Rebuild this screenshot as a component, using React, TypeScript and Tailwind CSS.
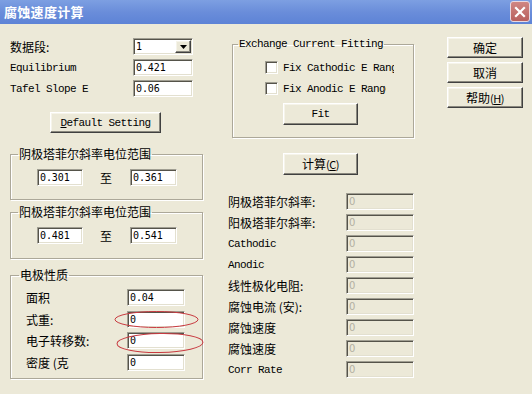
import React from "react";

const CJK = "font-['Noto_Sans_CJK_SC',sans-serif] text-[12px] leading-[14px]";
const MONO = "font-['Liberation_Mono','Noto_Sans_CJK_SC',monospace] text-[11px] tracking-[-0.6px] leading-[14px]";

const sunken =
  "border border-t-[#a09e92] border-l-[#a09e92] border-b-white border-r-white shadow-[inset_1px_1px_0_#55534a,inset_-1px_-1px_0_#e3e0d0]";
const raised =
  "border border-t-white border-l-white border-b-[#404040] border-r-[#404040] shadow-[inset_-1px_-1px_0_#8a887e,inset_1px_1px_0_#f6f4ea] bg-[#ece9d8]";

function Edit({ v, w, disabled }: { v: string; w: string; disabled?: boolean }) {
  return (
    <div
      className={`${w} h-[17px] ${sunken} ${disabled ? "bg-[#ece9d8]" : "bg-white"} flex items-center pl-[2px] overflow-hidden`}
    >
      {disabled ? (
        <span className="font-['DejaVu_Sans',sans-serif] text-[10px] leading-[12px] text-[#b3b0a2]">{v}</span>
      ) : (
        <span className="font-['DejaVu_Sans_Mono',monospace] text-[10px] tracking-[-0.1px] leading-[12px] text-black">{v}</span>
      )}
    </div>
  );
}

function Btn({ children, cls }: { children: React.ReactNode; cls: string }) {
  return <div className={`${raised} ${cls} flex items-center justify-center text-black`}>{children}</div>;
}

function Check() {
  return <div className={`w-[13px] h-[13px] bg-white ${sunken}`} />;
}

function Group({
  label,
  labelCls,
  cls,
  children,
}: {
  label: string;
  labelCls: string;
  cls: string;
  children: React.ReactNode;
}) {
  return (
    <fieldset
      className={`border border-[#aca899] rounded-none shadow-[1px_1px_0_#ffffff,inset_1px_1px_0_#ffffff] ${cls}`}
    >
      <legend className={`${labelCls} px-[1px] text-black`}>{label}</legend>
      {children}
    </fieldset>
  );
}

export default function App() {
  return (
    <div className="w-[532px] h-[394px] overflow-hidden bg-[#ece9d8] relative">
      {/* title bar */}
      <div className="h-[24px] flex items-start justify-between pl-[4px] pr-[2px] bg-gradient-to-b from-[#7d9fe2] via-[#6a8dda] to-[#5d83d6]">
        <span className="mt-[4px] font-['Noto_Sans_CJK_SC',sans-serif] font-bold text-[13px] leading-[16px] text-white tracking-[0.3px]">
          腐蚀速度计算
        </span>
        <div className="mt-[1px] w-[20px] h-[21px] rounded-[3px] border border-[#e8d8e0] bg-gradient-to-b from-[#d08682] to-[#b8605e] flex items-center justify-center">
          <svg width="12" height="12" viewBox="0 0 12 12">
            <path d="M2 2 L10 10 M10 2 L2 10" stroke="white" strokeWidth="2.2" strokeLinecap="square" />
          </svg>
        </div>
      </div>

      <div className="flex">
        {/* left column */}
        <div className="ml-[10px] w-[193px] flex flex-col">
          <div className="mt-[14px] flex flex-col gap-[4px]">
            <div className="h-[17px] flex items-center">
              <span className={`${CJK} w-[123px]`}>数据段:</span>
              <div className={`w-[60px] h-[17px] bg-white ${sunken} flex items-center pl-[2px] relative`}>
                <span className="font-['DejaVu_Sans_Mono',monospace] text-[10px] leading-[12px]">1</span>
                <div className={`absolute right-[1px] top-[1px] w-[16px] h-[13px] ${raised} flex items-center justify-center`}>
                  <svg width="7" height="4" viewBox="0 0 7 4">
                    <path d="M0 0 H7 L3.5 4 Z" fill="black" />
                  </svg>
                </div>
              </div>
            </div>
            <div className="h-[17px] flex items-center">
              <span className={`${MONO} w-[123px]`}>Equilibrium</span>
              <Edit v="0.421" w="w-[60px]" />
            </div>
            <div className="h-[17px] flex items-center">
              <span className={`${MONO} w-[123px]`}>Tafel Slope E</span>
              <Edit v="0.06" w="w-[60px]" />
            </div>
          </div>

          <Btn cls="mt-[15px] ml-[40px] w-[111px] h-[21px]">
            <span className={MONO}>
              <span className="underline">D</span>efault Setting
            </span>
          </Btn>

          <Group label="阴极塔菲尔斜率电位范围" labelCls={`${CJK} ml-[7px]`} cls="mt-[14px] h-[53px] w-[193px]">
            <div className="mt-[8px] ml-[26px] flex items-center">
              <Edit v="0.301" w="w-[46px]" />
              <span className={`${CJK} ml-[17px] w-[30px]`}>至</span>
              <Edit v="0.361" w="w-[47px]" />
            </div>
          </Group>

          <Group label="阳极塔菲尔斜率电位范围" labelCls={`${CJK} ml-[7px]`} cls="mt-[5px] h-[54px] w-[193px]">
            <div className="mt-[8px] ml-[26px] flex items-center">
              <Edit v="0.481" w="w-[46px]" />
              <span className={`${CJK} ml-[17px] w-[30px]`}>至</span>
              <Edit v="0.541" w="w-[47px]" />
            </div>
          </Group>

          <Group label="电极性质" labelCls={`${CJK} ml-[8px]`} cls="mt-[9px] h-[111px] w-[193px]">
            <div className="mt-[7px] ml-[15px] flex flex-col">
              <div className="h-[17px] flex items-center">
                <span className={`${CJK} w-[101px]`}>面积</span>
                <Edit v="0.04" w="w-[58px]" />
              </div>
              <div className="mt-[5px] h-[17px] flex items-center">
                <span className={`${CJK} w-[101px]`}>式重:</span>
                <Edit v="0" w="w-[58px]" />
              </div>
              <div className="mt-[4px] h-[17px] flex items-center">
                <span className={`${CJK} w-[101px]`}>电子转移数:</span>
                <Edit v="0" w="w-[58px]" />
              </div>
              <div className="mt-[5px] h-[17px] flex items-center">
                <span className={`${CJK} w-[101px]`}>密度 (克</span>
                <Edit v="0" w="w-[58px]" />
              </div>
            </div>
          </Group>
        </div>

        {/* middle column */}
        <div className="ml-[25px] w-[186px] flex flex-col">
          <Group label="Exchange Current Fitting" labelCls={`${MONO} ml-[5px]`} cls="mt-[13px] ml-[4px] h-[101px] w-[182px]">
            <div className="mt-[10px] pl-[32px] flex flex-col">
              <div className="h-[13px] flex items-center">
                <Check />
                <span className={`${MONO} ml-[5px] w-[111px] overflow-hidden whitespace-nowrap`}>Fix Cathodic E Range</span>
              </div>
              <div className="mt-[8px] h-[13px] flex items-center">
                <Check />
                <span className={`${MONO} ml-[5px] w-[103px] overflow-hidden whitespace-nowrap`}>Fix Anodic E Range</span>
              </div>
              <Btn cls="mt-[8px] ml-[18px] w-[75px] h-[22px]">
                <span className={MONO}>Fit</span>
              </Btn>
            </div>
          </Group>

          <Btn cls="mt-[15px] ml-[55px] w-[75px] h-[22px]">
            <span className={CJK}>
              计算<span className="text-[11px] tracking-[-0.5px]">(<span className="underline">C</span>)</span>
            </span>
          </Btn>

          <div className="mt-[18px] flex flex-col gap-[4px]">
            {[
              ["阴极塔菲尔斜率:", "cjk"],
              ["阳极塔菲尔斜率:", "cjk"],
              ["Cathodic", "mono"],
              ["Anodic", "mono"],
              ["线性极化电阻:", "cjk"],
              ["腐蚀电流 (安):", "cjk"],
              ["腐蚀速度", "cjk"],
              ["腐蚀速度", "cjk"],
              ["Corr Rate", "mono"],
            ].map(([t, f], i) => (
              <div key={i} className="h-[17px] flex items-center">
                <span className={`${f === "cjk" ? CJK : MONO} w-[118px] whitespace-nowrap`}>{t}</span>
                <Edit v="0" w="w-[68px]" disabled />
              </div>
            ))}
          </div>
        </div>

        {/* right column */}
        <div className="ml-[33px] flex flex-col">
          <Btn cls="mt-[13px] w-[76px] h-[21px]">
            <span className={CJK}>确定</span>
          </Btn>
          <Btn cls="mt-[4px] w-[76px] h-[21px]">
            <span className={CJK}>取消</span>
          </Btn>
          <Btn cls="mt-[4px] w-[76px] h-[21px]">
            <span className={CJK}>
              帮助<span className="text-[11px] tracking-[-0.5px]">(<span className="underline">H</span>)</span>
            </span>
          </Btn>
        </div>
      </div>

      {/* red annotation ellipses */}
      <svg className="absolute left-0 top-0 pointer-events-none" width="532" height="394">
        <ellipse cx="156.5" cy="319.5" rx="41.5" ry="8" fill="none" stroke="#c83a40" strokeWidth="1" />
        <ellipse cx="160" cy="343" rx="43" ry="9.5" fill="none" stroke="#c83a40" strokeWidth="1" transform="rotate(-1 160 343)" />
      </svg>
    </div>
  );
}
